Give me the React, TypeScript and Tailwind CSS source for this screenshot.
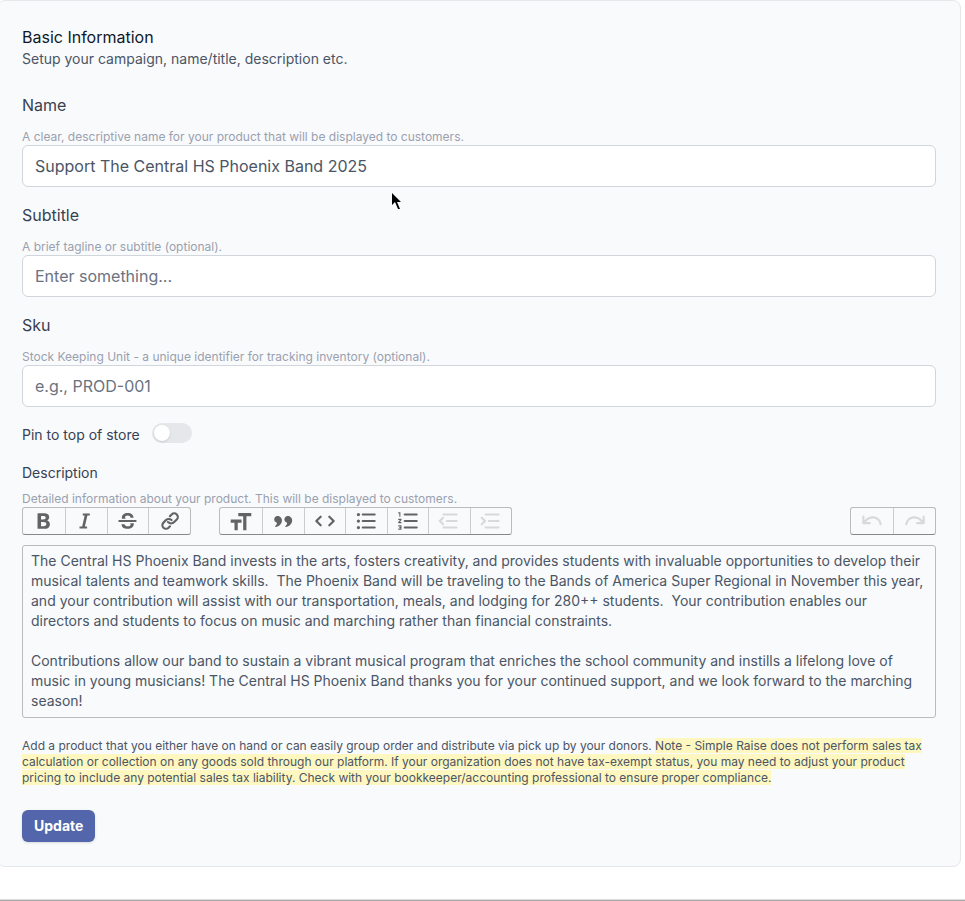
import { useState } from "react";
import clsx from "clsx";

const icons = {
  bold: "M6.522 19.242a.5.5 0 0 1-.5-.5V5.35a.5.5 0 0 1 .5-.5h5.783c1.347 0 2.46.345 3.24.982.783.64 1.216 1.562 1.216 2.683 0 1.13-.587 2.129-1.476 2.71a.35.35 0 0 0 .049.613c1.259.56 2.101 1.742 2.101 3.22 0 1.282-.483 2.334-1.363 3.063-.876.726-2.132 1.12-3.66 1.12h-5.89ZM9.27 7.347v3.362h1.97c.766 0 1.347-.17 1.733-.464.38-.291.587-.716.587-1.27 0-.53-.183-.928-.513-1.198-.334-.273-.838-.43-1.505-.43H9.27Zm0 5.606v3.791h2.389c.832 0 1.448-.177 1.853-.497.399-.315.614-.786.614-1.423 0-.62-.22-1.077-.63-1.385-.418-.313-1.053-.486-1.905-.486H9.27Z",
  italic: "M9 5h6.5v2h-2.23l-2.31 10H13v2H6v-2h2.461l2.306-10H9V5Z",
  strike: "M6 14.986c.088 2.647 2.246 4.258 5.635 4.258 3.496 0 5.713-1.728 5.713-4.463 0-.275-.02-.536-.062-.781h-3.461c.398.293.573.654.573 1.123 0 1.035-1.074 1.787-2.646 1.787-1.563 0-2.773-.762-2.91-1.924H6ZM6.432 10h3.763c-.632-.314-.914-.715-.914-1.273 0-1.045.977-1.739 2.432-1.739 1.475 0 2.52.723 2.617 1.914h2.764c-.05-2.548-2.11-4.238-5.39-4.238-3.145 0-5.392 1.719-5.392 4.316 0 .363.04.703.12 1.02ZM4 11a1 1 0 1 0 0 2h15a1 1 0 1 0 0-2H4Z",
  link: "M18.948 5.258a4.337 4.337 0 0 0-6.108 0L11.217 6.87a.993.993 0 0 0 0 1.41c.392.39 1.027.39 1.418 0l1.623-1.613a2.323 2.323 0 0 1 3.271 0 2.29 2.29 0 0 1 0 3.251l-2.393 2.38a3.021 3.021 0 0 1-4.255 0l-.05-.049a1.007 1.007 0 0 0-1.418 0 .993.993 0 0 0 0 1.41l.05.049a5.036 5.036 0 0 0 7.091 0l2.394-2.38a4.275 4.275 0 0 0 0-6.072Zm-13.683 13.6a4.337 4.337 0 0 0 6.108 0l1.262-1.255a.993.993 0 0 0 0-1.41 1.007 1.007 0 0 0-1.418 0L9.954 17.45a2.323 2.323 0 0 1-3.27 0 2.29 2.29 0 0 1 0-3.251l2.344-2.331a2.579 2.579 0 0 1 3.631 0c.392.39 1.027.39 1.419 0a.993.993 0 0 0 0-1.41 4.593 4.593 0 0 0-6.468 0l-2.345 2.33a4.275 4.275 0 0 0 0 6.072Z",
  heading: "M21.5 7.5v-3h-12v3H14v13h3v-13h4.5ZM9 13.5h3.5v-3h-10v3H6v7h3v-7Z",
  quote: "M4.581 8.471c.44-.5 1.056-.834 1.758-.995C8.074 7.17 9.201 7.822 10 8.752c1.354 1.578 1.33 3.555.394 5.277-.941 1.731-2.788 3.163-4.988 3.56a.622.622 0 0 1-.653-.317c-.113-.205-.121-.49.16-.764.294-.286.567-.566.791-.835.222-.266.413-.54.524-.815.113-.28.156-.597.026-.908-.128-.303-.39-.524-.72-.69a3.02 3.02 0 0 1-1.674-2.7c0-.905.283-1.59.72-2.088Zm9.419 0c.44-.5 1.055-.834 1.758-.995 1.734-.306 2.862.346 3.66 1.276 1.355 1.578 1.33 3.555.395 5.277-.941 1.731-2.789 3.163-4.988 3.56a.622.622 0 0 1-.653-.317c-.113-.205-.122-.49.16-.764.294-.286.567-.566.791-.835.222-.266.412-.54.523-.815.114-.28.157-.597.026-.908-.127-.303-.39-.524-.72-.69a3.02 3.02 0 0 1-1.672-2.701c0-.905.283-1.59.72-2.088Z",
  code: "M3.293 11.293a1 1 0 0 0 0 1.414l4 4a1 1 0 1 0 1.414-1.414L5.414 12l3.293-3.293a1 1 0 0 0-1.414-1.414l-4 4Zm13.414 5.414 4-4a1 1 0 0 0 0-1.414l-4-4a1 1 0 1 0-1.414 1.414L18.586 12l-3.293 3.293a1 1 0 0 0 1.414 1.414Z",
  bullets: "M5 7.5a1.5 1.5 0 1 0 0-3 1.5 1.5 0 0 0 0 3ZM8 6a1 1 0 0 1 1-1h11a1 1 0 1 1 0 2H9a1 1 0 0 1-1-1Zm1 5a1 1 0 1 0 0 2h11a1 1 0 1 0 0-2H9Zm0 6a1 1 0 1 0 0 2h11a1 1 0 1 0 0-2H9Zm-2.5-5a1.5 1.5 0 1 1-3 0 1.5 1.5 0 0 1 3 0ZM5 19.5a1.5 1.5 0 1 0 0-3 1.5 1.5 0 0 0 0 3Z",
  numbers: "M3 4h2v4H4V5H3V4Zm5 2a1 1 0 0 1 1-1h11a1 1 0 1 1 0 2H9a1 1 0 0 1-1-1Zm1 5a1 1 0 1 0 0 2h11a1 1 0 1 0 0-2H9Zm0 6a1 1 0 1 0 0 2h11a1 1 0 1 0 0-2H9Zm-3.5-7H6v1l-1.5 2H6v1H3v-1l1.667-2H3v-1h2.5ZM3 17v-1h3v4H3v-1h2v-.5H4v-1h1V17H3Z",
  outdent: "M6 6a1 1 0 0 1 1-1h12a1 1 0 1 1 0 2H7a1 1 0 0 1-1-1Zm4 5a1 1 0 1 0 0 2h9a1 1 0 1 0 0-2h-9Zm-3 6a1 1 0 1 0 0 2h12a1 1 0 1 0 0-2H7Zm-1.207-8.707a1 1 0 0 1 1.414 1.414L4.914 12l2.293 2.293a1 1 0 1 1-1.414 1.414l-3-3a1 1 0 0 1 0-1.414l3-3Z",
  indent: "M6 6a1 1 0 0 1 1-1h12a1 1 0 1 1 0 2H7a1 1 0 0 1-1-1Zm4 5a1 1 0 1 0 0 2h9a1 1 0 1 0 0-2h-9Zm-3 6a1 1 0 1 0 0 2h12a1 1 0 1 0 0-2H7Zm-2.793-8.707a1 1 0 0 0-1.414 1.414L5.086 12l-2.293 2.293a1 1 0 1 0 1.414 1.414l3-3a1 1 0 0 0 0-1.414l-3-3Z",
  undo: "M3 14a1 1 0 0 0 1 1h6a1 1 0 1 0 0-2H6.257c2.247-2.764 5.151-3.668 7.579-3.264 2.589.432 4.739 2.356 5.174 5.405a1 1 0 0 0 1.98-.283c-.564-3.95-3.415-6.526-6.825-7.095C11.084 7.25 7.63 8.377 5 11.39V8a1 1 0 0 0-2 0v6Z",
  redo: "M21 14a1 1 0 0 1-1 1h-6a1 1 0 1 1 0-2h3.743c-2.247-2.764-5.151-3.668-7.579-3.264-2.589.432-4.739 2.356-5.174 5.405a1 1 0 0 1-1.98-.283c.564-3.95 3.415-6.526 6.826-7.095 3.08-.513 6.534.614 9.164 3.626V8a1 1 0 1 1 2 0v6Z",
};

type IconName = keyof typeof icons;
type Tool = { icon: IconName; label: string; disabled?: boolean };

const textTools: Tool[] = [
  { icon: "bold", label: "Bold" },
  { icon: "italic", label: "Italic" },
  { icon: "strike", label: "Strikethrough" },
  { icon: "link", label: "Link" },
];

const blockTools: Tool[] = [
  { icon: "heading", label: "Heading" },
  { icon: "quote", label: "Quote" },
  { icon: "code", label: "Code" },
  { icon: "bullets", label: "Bullets" },
  { icon: "numbers", label: "Numbers" },
  { icon: "outdent", label: "Decrease level", disabled: true },
  { icon: "indent", label: "Increase level", disabled: true },
];

const historyTools: Tool[] = [
  { icon: "undo", label: "Undo", disabled: true },
  { icon: "redo", label: "Redo", disabled: true },
];

const description = `The Central HS Phoenix Band invests in the arts, fosters creativity, and provides students with invaluable opportunities to develop their musical talents and teamwork skills.  The Phoenix Band will be traveling to the Bands of America Super Regional in November this year, and your contribution will assist with our transportation, meals, and lodging for 280++ students.  Your contribution enables our directors and students to focus on music and marching rather than financial constraints.

Contributions allow our band to sustain a vibrant musical program that enriches the school community and instills a lifelong love of music in young musicians! The Central HS Phoenix Band thanks you for your continued support, and we look forward to the marching season!`;

function ToolGroup({ tools, className }: { tools: Tool[]; className: string }) {
  return (
    <div className={clsx("flex h-7 rounded-[3px] border border-[#bbb] border-b-[#888]", className)}>
      {tools.map((tool, i) => (
        <button
          key={tool.icon}
          type="button"
          aria-label={tool.label}
          disabled={tool.disabled}
          className={clsx("flex items-center justify-center", i > 0 ? "flex-1 border-l border-[#ccc]" : "w-[42px]")}
        >
          <svg viewBox="0 0 24 24" className={clsx("size-[26px]", tool.disabled ? "opacity-[.125]" : "opacity-60")} aria-hidden="true">
            <path d={icons[tool.icon]} />
          </svg>
        </button>
      ))}
    </div>
  );
}

type FieldProps = { id: string; label: string; hint: string; value?: string; placeholder?: string };

function Field({ id, label, hint, value, placeholder }: FieldProps) {
  return (
    <div>
      <label htmlFor={id} className="block text-base text-gray-700">{label}</label>
      <p id={`${id}-hint`} className="mt-3 text-xs text-gray-400">{hint}</p>
      <input
        id={id}
        type="text"
        aria-describedby={`${id}-hint`}
        defaultValue={value}
        placeholder={placeholder}
        className="block h-[42px] w-full rounded-md border border-gray-300 bg-white px-3 text-base text-gray-600 placeholder:text-gray-500"
      />
    </div>
  );
}

export default function App() {
  const [pinned, setPinned] = useState(false);

  return (
    <div className="relative flex min-h-screen flex-col justify-between overflow-hidden bg-white font-['Inter',sans-serif]">
      <form
        className="mr-1 -ml-[3px] rounded-lg border border-gray-200 bg-[#f9fafc] p-6"
        onSubmit={(e) => e.preventDefault()}
      >
        <h2 className="text-base text-gray-900">Basic Information</h2>
        <p className="text-sm text-gray-600">Setup your campaign, name/title, description etc.</p>

        <div className="mt-6 space-y-4">
          <Field
            id="name"
            label="Name"
            hint="A clear, descriptive name for your product that will be displayed to customers."
            value="Support The Central HS Phoenix Band 2025"
          />
          <Field id="subtitle" label="Subtitle" hint="A brief tagline or subtitle (optional)." placeholder="Enter something..." />
          <Field
            id="sku"
            label="Sku"
            hint="Stock Keeping Unit - a unique identifier for tracking inventory (optional)."
            placeholder="e.g., PROD-001"
          />
        </div>

        <div className="mt-4 flex gap-3">
          <label htmlFor="pinned" className="pt-[2px] text-sm text-gray-700">Pin to top of store</label>
          <input
            id="pinned"
            type="checkbox"
            role="switch"
            checked={pinned}
            onChange={(e) => setPinned(e.target.checked)}
            className="h-5 w-10 appearance-none rounded-full bg-gray-200 p-[2px] before:block before:size-4 before:rounded-full before:bg-white before:shadow-sm checked:bg-[#5366ab] checked:before:ml-5"
          />
        </div>

        <label htmlFor="description" className="mt-[18px] block text-sm text-gray-700">Description</label>
        <p id="description-hint" className="mt-2 text-xs text-gray-400">
          Detailed information about your product. This will be displayed to customers.
        </p>
        <div className="flex" role="toolbar" aria-label="Formatting">
          <ToolGroup tools={textTools} className="w-[169px]" />
          <ToolGroup tools={blockTools} className="ml-7 w-[293px]" />
          <ToolGroup tools={historyTools} className="ml-auto w-[86px]" />
        </div>
        <textarea
          id="description"
          aria-describedby="description-hint"
          defaultValue={description}
          className="mt-[10px] block min-h-[173px] w-full resize-none field-sizing-content rounded-[3px] border border-[#bbb] px-2 py-[5px] text-sm text-gray-600"
        />

        <p className="mt-5 text-xs text-gray-600">
          Add a product that you either have on hand or can easily group order and distribute via pick up by your donors.{" "}
          <mark className="bg-[#fef7bf] text-gray-600">
            Note - Simple Raise does not perform sales tax calculation or collection on any goods sold through our
            platform. If your organization does not have tax-exempt status, you may need to adjust your product pricing
            to include any potential sales tax liability. Check with your bookkeeper/accounting professional to ensure
            proper compliance.
          </mark>
        </p>

        <button type="submit" className="mt-6 flex h-8 items-center rounded-md bg-[#5366ab] px-3 text-sm font-bold text-white shadow-sm">
          Update
        </button>
      </form>

      <div className="h-[2px] border-b border-[#aaa] bg-[#ddd]" />

      {/* mouse pointer */}
      <svg viewBox="0 0 10 17" className="pointer-events-none absolute top-[193px] left-[392px] h-[17px] w-[10px]" aria-hidden="true">
        <path d="M0 0v12l3-3 3 7h2l-3-7h4z" />
      </svg>
    </div>
  );
}
